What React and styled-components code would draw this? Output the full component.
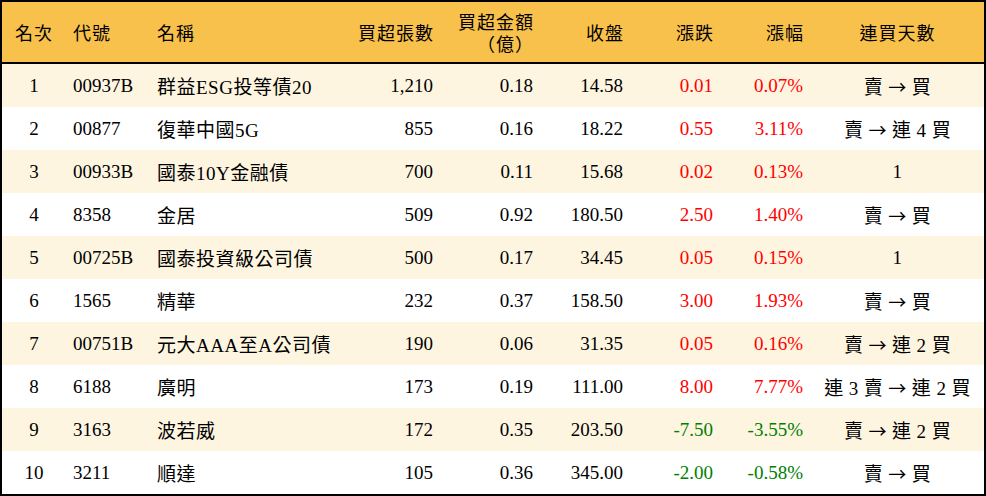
import React from "react";
import styled, { createGlobalStyle } from "styled-components";

const GlobalStyle = createGlobalStyle`
  html, body {
    margin: 0;
    padding: 0;
    background: #fff;
  }
  * {
    box-sizing: border-box;
  }
`;

const COLUMNS = "64px 84px 190px 101px 100px 90px 90px 90px 1fr";

const Board = styled.div`
  width: 986px;
  height: 496px;
  border: 2px solid #000;
  background: #fff;
  font-family: "Liberation Serif", "Noto Sans CJK TC", serif;
  font-size: 19px;
  color: #000;
  overflow: hidden;
`;

const HeadRow = styled.div`
  display: grid;
  grid-template-columns: ${COLUMNS};
  height: 62px;
  background: #f8c14b;
  border-bottom: 2px solid #000;
`;

const HeadCell = styled.div`
  display: flex;
  flex-direction: column;
  justify-content: center;
  align-items: ${(p) =>
    p.$align === "right" ? "flex-end" : p.$align === "left" ? "flex-start" : "center"};
  padding: ${(p) => (p.$align === "right" ? "0 7px 0 0" : p.$align === "left" ? "0 0 0 7px" : "0")};
  font-family: "Noto Sans CJK TC", serif;
  font-size: 18px;
  letter-spacing: 1px;
  line-height: 22px;
  white-space: nowrap;
`;

const HeadLine = styled.span`
  display: block;
  height: 22px;
  overflow: visible;
`;

const Row = styled.div`
  display: grid;
  grid-template-columns: ${COLUMNS};
  height: 43px;
  background: ${(p) => (p.$shade ? "#fef5e0" : "#fff")};
`;

const Cell = styled.div`
  display: flex;
  align-items: center;
  justify-content: ${(p) =>
    p.$align === "right" ? "flex-end" : p.$align === "left" ? "flex-start" : "center"};
  padding: ${(p) => (p.$align === "right" ? "0 8px 0 0" : p.$align === "left" ? "0 0 0 7px" : "0")};
  color: ${(p) => p.$tone || "#000"};
  white-space: pre;
`;

const NameCell = styled(Cell)`
  letter-spacing: 0.5px;
`;

const StreakCell = styled(Cell)`
  letter-spacing: 0.4px;
`;

const Arrow = styled.span`
  font-family: "Noto Sans CJK TC", sans-serif;
  font-size: 18px;
`;

const rows = [
  ["1", "00937B", "群益ESG投等債20", "1,210", "0.18", "14.58", "0.01", "0.07%", "賣 → 買"],
  ["2", "00877", "復華中國5G", "855", "0.16", "18.22", "0.55", "3.11%", "賣 → 連 4 買"],
  ["3", "00933B", "國泰10Y金融債", "700", "0.11", "15.68", "0.02", "0.13%", "1"],
  ["4", "8358", "金居", "509", "0.92", "180.50", "2.50", "1.40%", "賣 → 買"],
  ["5", "00725B", "國泰投資級公司債", "500", "0.17", "34.45", "0.05", "0.15%", "1"],
  ["6", "1565", "精華", "232", "0.37", "158.50", "3.00", "1.93%", "賣 → 買"],
  ["7", "00751B", "元大AAA至A公司債", "190", "0.06", "31.35", "0.05", "0.16%", "賣 → 連 2 買"],
  ["8", "6188", "廣明", "173", "0.19", "111.00", "8.00", "7.77%", "連 3 賣 → 連 2 買"],
  ["9", "3163", "波若威", "172", "0.35", "203.50", "-7.50", "-3.55%", "賣 → 連 2 買"],
  ["10", "3211", "順達", "105", "0.36", "345.00", "-2.00", "-0.58%", "賣 → 買"],
];

const toneOf = (change) => (change.startsWith("-") ? "#008000" : "#ff0000");

// splits the streak text so the arrow gets a full-width glyph
const Streak = ({ text }) => {
  const parts = text.split("→");
  if (parts.length === 1) return <StreakCell>{text}</StreakCell>;
  return (
    <StreakCell>
      {parts[0]}
      <Arrow>→</Arrow>
      {parts[1]}
    </StreakCell>
  );
};

const App = () => {
  return (
    <>
      <GlobalStyle />
      <Board>
        <HeadRow>
          <HeadCell>名次</HeadCell>
          <HeadCell $align="left">代號</HeadCell>
          <HeadCell $align="left">名稱</HeadCell>
          <HeadCell $align="right">買超張數</HeadCell>
          <HeadCell $align="right">
            <HeadLine>買超金額</HeadLine>
            <HeadLine>（億）</HeadLine>
          </HeadCell>
          <HeadCell $align="right">收盤</HeadCell>
          <HeadCell $align="right">漲跌</HeadCell>
          <HeadCell $align="right">漲幅</HeadCell>
          <HeadCell>連買天數</HeadCell>
        </HeadRow>
        {rows.map((r, i) => (
          <Row key={r[0]} $shade={i % 2 === 0}>
            <Cell>{r[0]}</Cell>
            <Cell $align="left">{r[1]}</Cell>
            <NameCell $align="left">{r[2]}</NameCell>
            <Cell $align="right">{r[3]}</Cell>
            <Cell $align="right">{r[4]}</Cell>
            <Cell $align="right">{r[5]}</Cell>
            <Cell $align="right" $tone={toneOf(r[6])}>{r[6]}</Cell>
            <Cell $align="right" $tone={toneOf(r[6])}>{r[7]}</Cell>
            <Streak text={r[8]} />
          </Row>
        ))}
      </Board>
    </>
  );
};

export default App;
